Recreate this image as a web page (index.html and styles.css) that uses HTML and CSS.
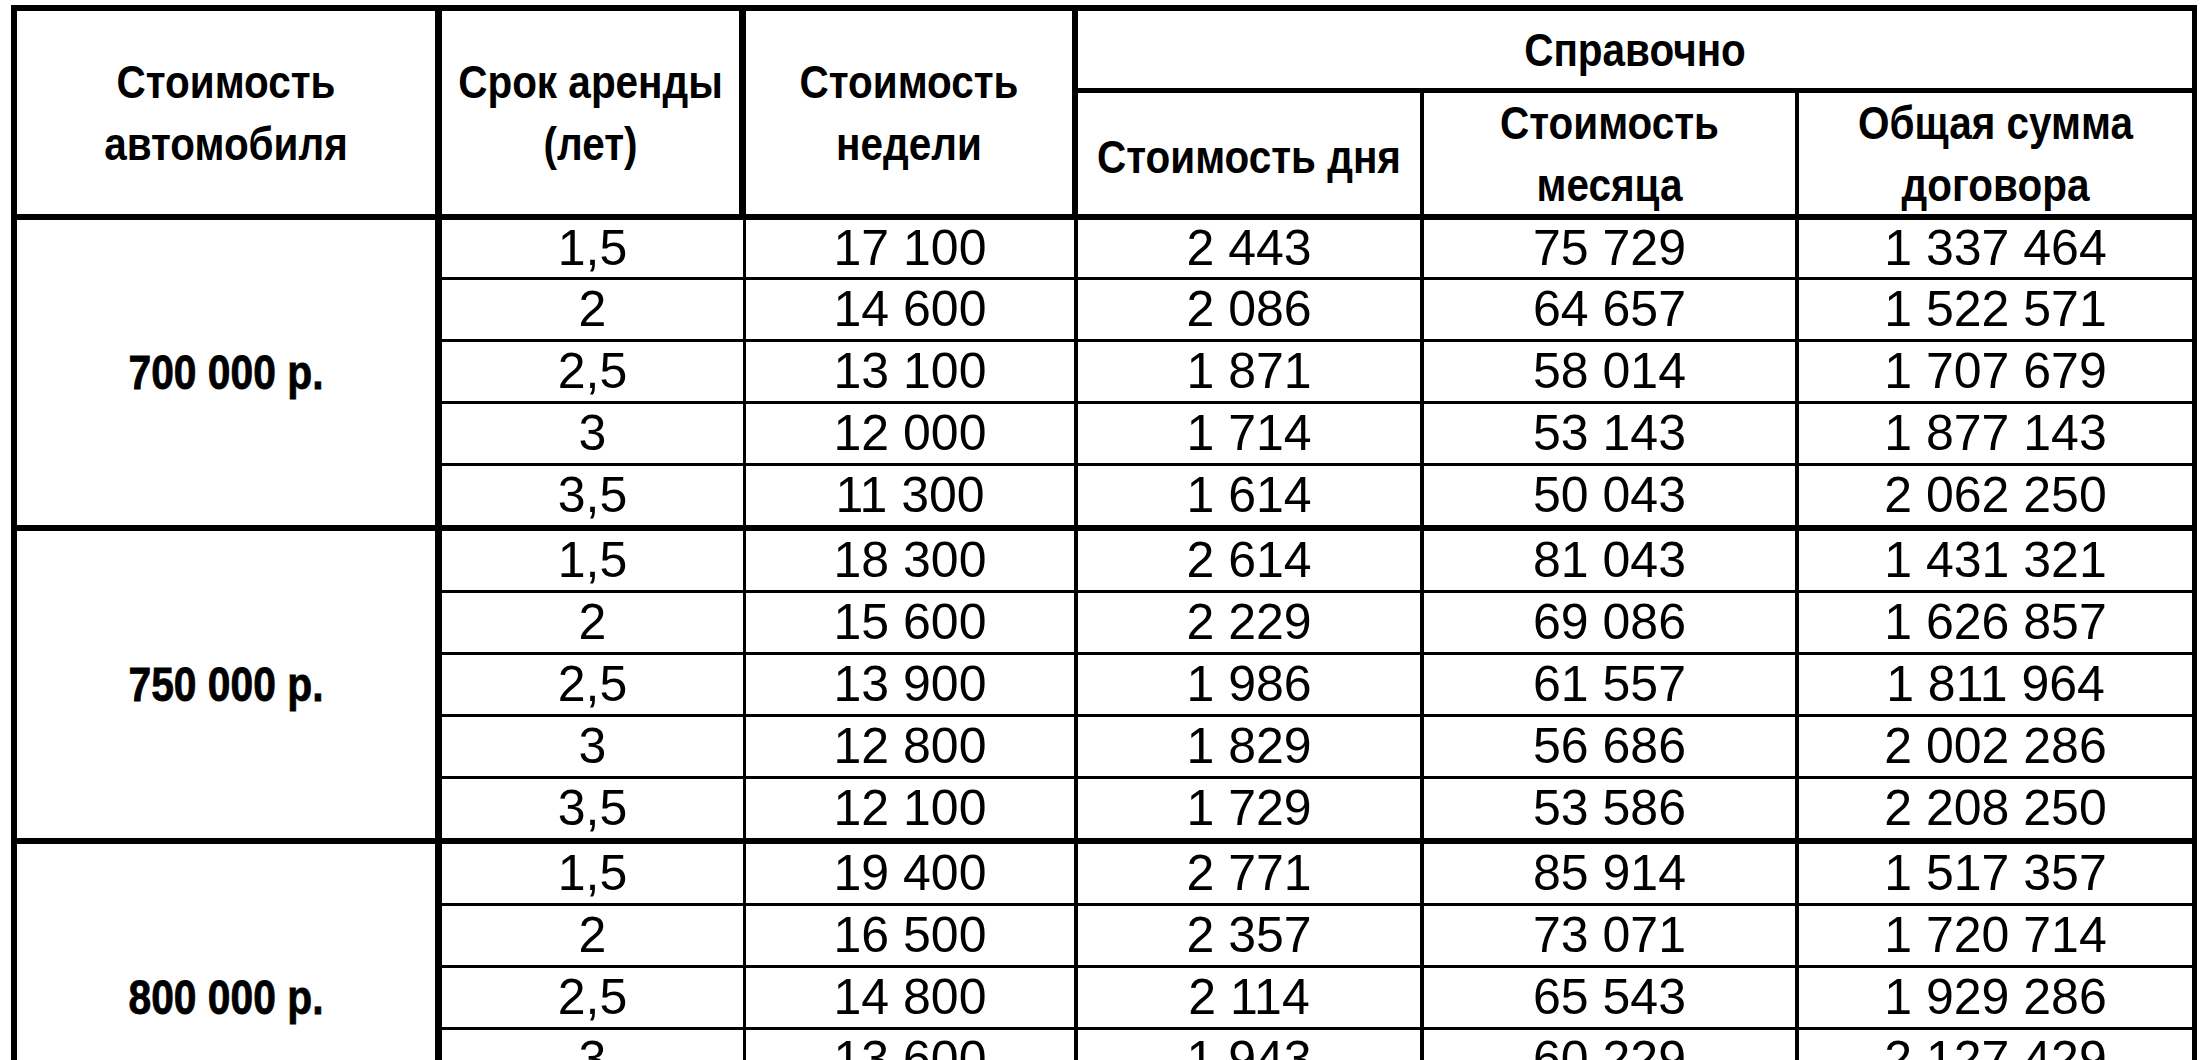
FILE: index.html
```html
<!DOCTYPE html>
<html lang="ru">
<head>
<meta charset="utf-8">
<title>Стоимость аренды</title>
<link rel="stylesheet" href="styles.css">
</head>
<body>
<div class="sheet">
<table class="grid">
<thead>
<tr>
<th class="hc1" rowspan="2"><div class="box hb w1 htall">Стоимость<br>автомобиля</div></th>
<th class="hc2" rowspan="2"><div class="box hb w2h htall">Срок аренды<br>(лет)</div></th>
<th class="hc3" rowspan="2"><div class="box hb w3h htall">Стоимость<br>недели</div></th>
<th class="hgrp" colspan="3"><div class="box hb wg hgin">Справочно</div></th>
</tr>
<tr>
<th class="hc4"><div class="box hb w4 hsub dn">Стоимость дня</div></th>
<th class="hc5"><div class="box hb w5 hsub">Стоимость<br>месяца</div></th>
<th class="hc6"><div class="box hb w6 hsub">Общая сумма<br>договора</div></th>
</tr>
</thead>
<tbody>
<tr class="first">
<td class="price" rowspan="5"><div class="box pl w1">700 000 р.</div></td>
<td class="c2"><div class="box num w2">1,5</div></td>
<td class="c3"><div class="box num w3">17 100</div></td>
<td class="c4"><div class="box num w4">2 443</div></td>
<td class="c5"><div class="box num w5">75 729</div></td>
<td class="c6"><div class="box num w6">1 337 464</div></td>
</tr>
<tr>
<td class="c2"><div class="box num w2">2</div></td>
<td class="c3"><div class="box num w3">14 600</div></td>
<td class="c4"><div class="box num w4">2 086</div></td>
<td class="c5"><div class="box num w5">64 657</div></td>
<td class="c6"><div class="box num w6">1 522 571</div></td>
</tr>
<tr>
<td class="c2"><div class="box num w2">2,5</div></td>
<td class="c3"><div class="box num w3">13 100</div></td>
<td class="c4"><div class="box num w4">1 871</div></td>
<td class="c5"><div class="box num w5">58 014</div></td>
<td class="c6"><div class="box num w6">1 707 679</div></td>
</tr>
<tr>
<td class="c2"><div class="box num w2">3</div></td>
<td class="c3"><div class="box num w3">12 000</div></td>
<td class="c4"><div class="box num w4">1 714</div></td>
<td class="c5"><div class="box num w5">53 143</div></td>
<td class="c6"><div class="box num w6">1 877 143</div></td>
</tr>
<tr class="last">
<td class="c2"><div class="box num w2">3,5</div></td>
<td class="c3"><div class="box num w3">11 300</div></td>
<td class="c4"><div class="box num w4">1 614</div></td>
<td class="c5"><div class="box num w5">50 043</div></td>
<td class="c6"><div class="box num w6">2 062 250</div></td>
</tr>

<tr>
<td class="price" rowspan="5"><div class="box pl w1">750 000 р.</div></td>
<td class="c2"><div class="box num w2">1,5</div></td>
<td class="c3"><div class="box num w3">18 300</div></td>
<td class="c4"><div class="box num w4">2 614</div></td>
<td class="c5"><div class="box num w5">81 043</div></td>
<td class="c6"><div class="box num w6">1 431 321</div></td>
</tr>
<tr>
<td class="c2"><div class="box num w2">2</div></td>
<td class="c3"><div class="box num w3">15 600</div></td>
<td class="c4"><div class="box num w4">2 229</div></td>
<td class="c5"><div class="box num w5">69 086</div></td>
<td class="c6"><div class="box num w6">1 626 857</div></td>
</tr>
<tr>
<td class="c2"><div class="box num w2">2,5</div></td>
<td class="c3"><div class="box num w3">13 900</div></td>
<td class="c4"><div class="box num w4">1 986</div></td>
<td class="c5"><div class="box num w5">61 557</div></td>
<td class="c6"><div class="box num w6">1 811 964</div></td>
</tr>
<tr>
<td class="c2"><div class="box num w2">3</div></td>
<td class="c3"><div class="box num w3">12 800</div></td>
<td class="c4"><div class="box num w4">1 829</div></td>
<td class="c5"><div class="box num w5">56 686</div></td>
<td class="c6"><div class="box num w6">2 002 286</div></td>
</tr>
<tr class="last">
<td class="c2"><div class="box num w2">3,5</div></td>
<td class="c3"><div class="box num w3">12 100</div></td>
<td class="c4"><div class="box num w4">1 729</div></td>
<td class="c5"><div class="box num w5">53 586</div></td>
<td class="c6"><div class="box num w6">2 208 250</div></td>
</tr>

<tr>
<td class="price" rowspan="5"><div class="box pl w1">800 000 р.</div></td>
<td class="c2"><div class="box num w2">1,5</div></td>
<td class="c3"><div class="box num w3">19 400</div></td>
<td class="c4"><div class="box num w4">2 771</div></td>
<td class="c5"><div class="box num w5">85 914</div></td>
<td class="c6"><div class="box num w6">1 517 357</div></td>
</tr>
<tr>
<td class="c2"><div class="box num w2">2</div></td>
<td class="c3"><div class="box num w3">16 500</div></td>
<td class="c4"><div class="box num w4">2 357</div></td>
<td class="c5"><div class="box num w5">73 071</div></td>
<td class="c6"><div class="box num w6">1 720 714</div></td>
</tr>
<tr>
<td class="c2"><div class="box num w2">2,5</div></td>
<td class="c3"><div class="box num w3">14 800</div></td>
<td class="c4"><div class="box num w4">2 114</div></td>
<td class="c5"><div class="box num w5">65 543</div></td>
<td class="c6"><div class="box num w6">1 929 286</div></td>
</tr>
<tr>
<td class="c2"><div class="box num w2">3</div></td>
<td class="c3"><div class="box num w3">13 600</div></td>
<td class="c4"><div class="box num w4">1 943</div></td>
<td class="c5"><div class="box num w5">60 229</div></td>
<td class="c6"><div class="box num w6">2 127 429</div></td>
</tr>
<tr class="last">
<td class="c2"><div class="box num w2">3,5</div></td>
<td class="c3"><div class="box num w3">12 900</div></td>
<td class="c4"><div class="box num w4">1 843</div></td>
<td class="c5"><div class="box num w5">57 129</div></td>
<td class="c6"><div class="box num w6">2 354 250</div></td>
</tr>
</tbody>
</table>
</div>
</body>
</html>
```

FILE: styles.css
```css
html, body {
  margin: 0;
  padding: 0;
  background: #ffffff;
}

.sheet {
  padding: 5px 0 0 11px;
}

.grid {
  border-collapse: separate;
  border-spacing: 0;
  font-family: "Liberation Sans", Arial, sans-serif;
  color: #000000;
}

.grid th,
.grid td {
  padding: 0;
  border: 0 solid #000000;
  vertical-align: middle;
}

.box {
  display: flex;
  flex-direction: column;
  align-items: center;
  justify-content: center;
  text-align: center;
  white-space: nowrap;
}

/* header */
.hb {
  font-weight: bold;
  font-size: 46px;
  line-height: 62px;
  transform: scaleX(0.88);
}

.hc1 { border-width: 6px 7px 6px 6px !important; }
.hc2 { border-width: 6px 7px 6px 0 !important; }
.hc3 { border-width: 6px 6px 6px 0 !important; }
.hgrp { border-width: 6px 5px 5px 0 !important; }
.hc4 { border-width: 0 4px 6px 0 !important; }
.hc5 { border-width: 0 4px 6px 0 !important; }
.hc6 { border-width: 0 5px 6px 0 !important; }

.htall { height: 203px; }
.hgin { height: 77px; }
.hsub { height: 121px; }
.dn { padding-top: 7px; box-sizing: border-box; }

/* widths */
.w1 { width: 418px; }
.w2h { width: 297px; }
.w3h { width: 326px; }
.w2 { width: 301px; }
.w3 { width: 328px; }
.wg { width: 1114px; }
.w4 { width: 342px; }
.w5 { width: 371px; }
.w6 { width: 393px; }

/* body */
.price { border-width: 0 7px 6px 6px !important; }
.c2 { border-width: 0 3px 3px 0 !important; }
.c3 { border-width: 0 4px 3px 0 !important; }
.c4 { border-width: 0 4px 3px 0 !important; }
.c5 { border-width: 0 4px 3px 0 !important; }
.c6 { border-width: 0 5px 3px 0 !important; }

.grid tr.last td { border-bottom-width: 6px !important; }

.num {
  font-size: 50px;
  line-height: 59px;
  height: 59px;
}

.first .num {
  height: 57px;
  line-height: 57px;
}

.pl {
  font-weight: bold;
  font-size: 48px;
  line-height: 60px;
  transform: scaleX(0.85);
  -webkit-text-stroke: 0.8px #000000;
}
```
